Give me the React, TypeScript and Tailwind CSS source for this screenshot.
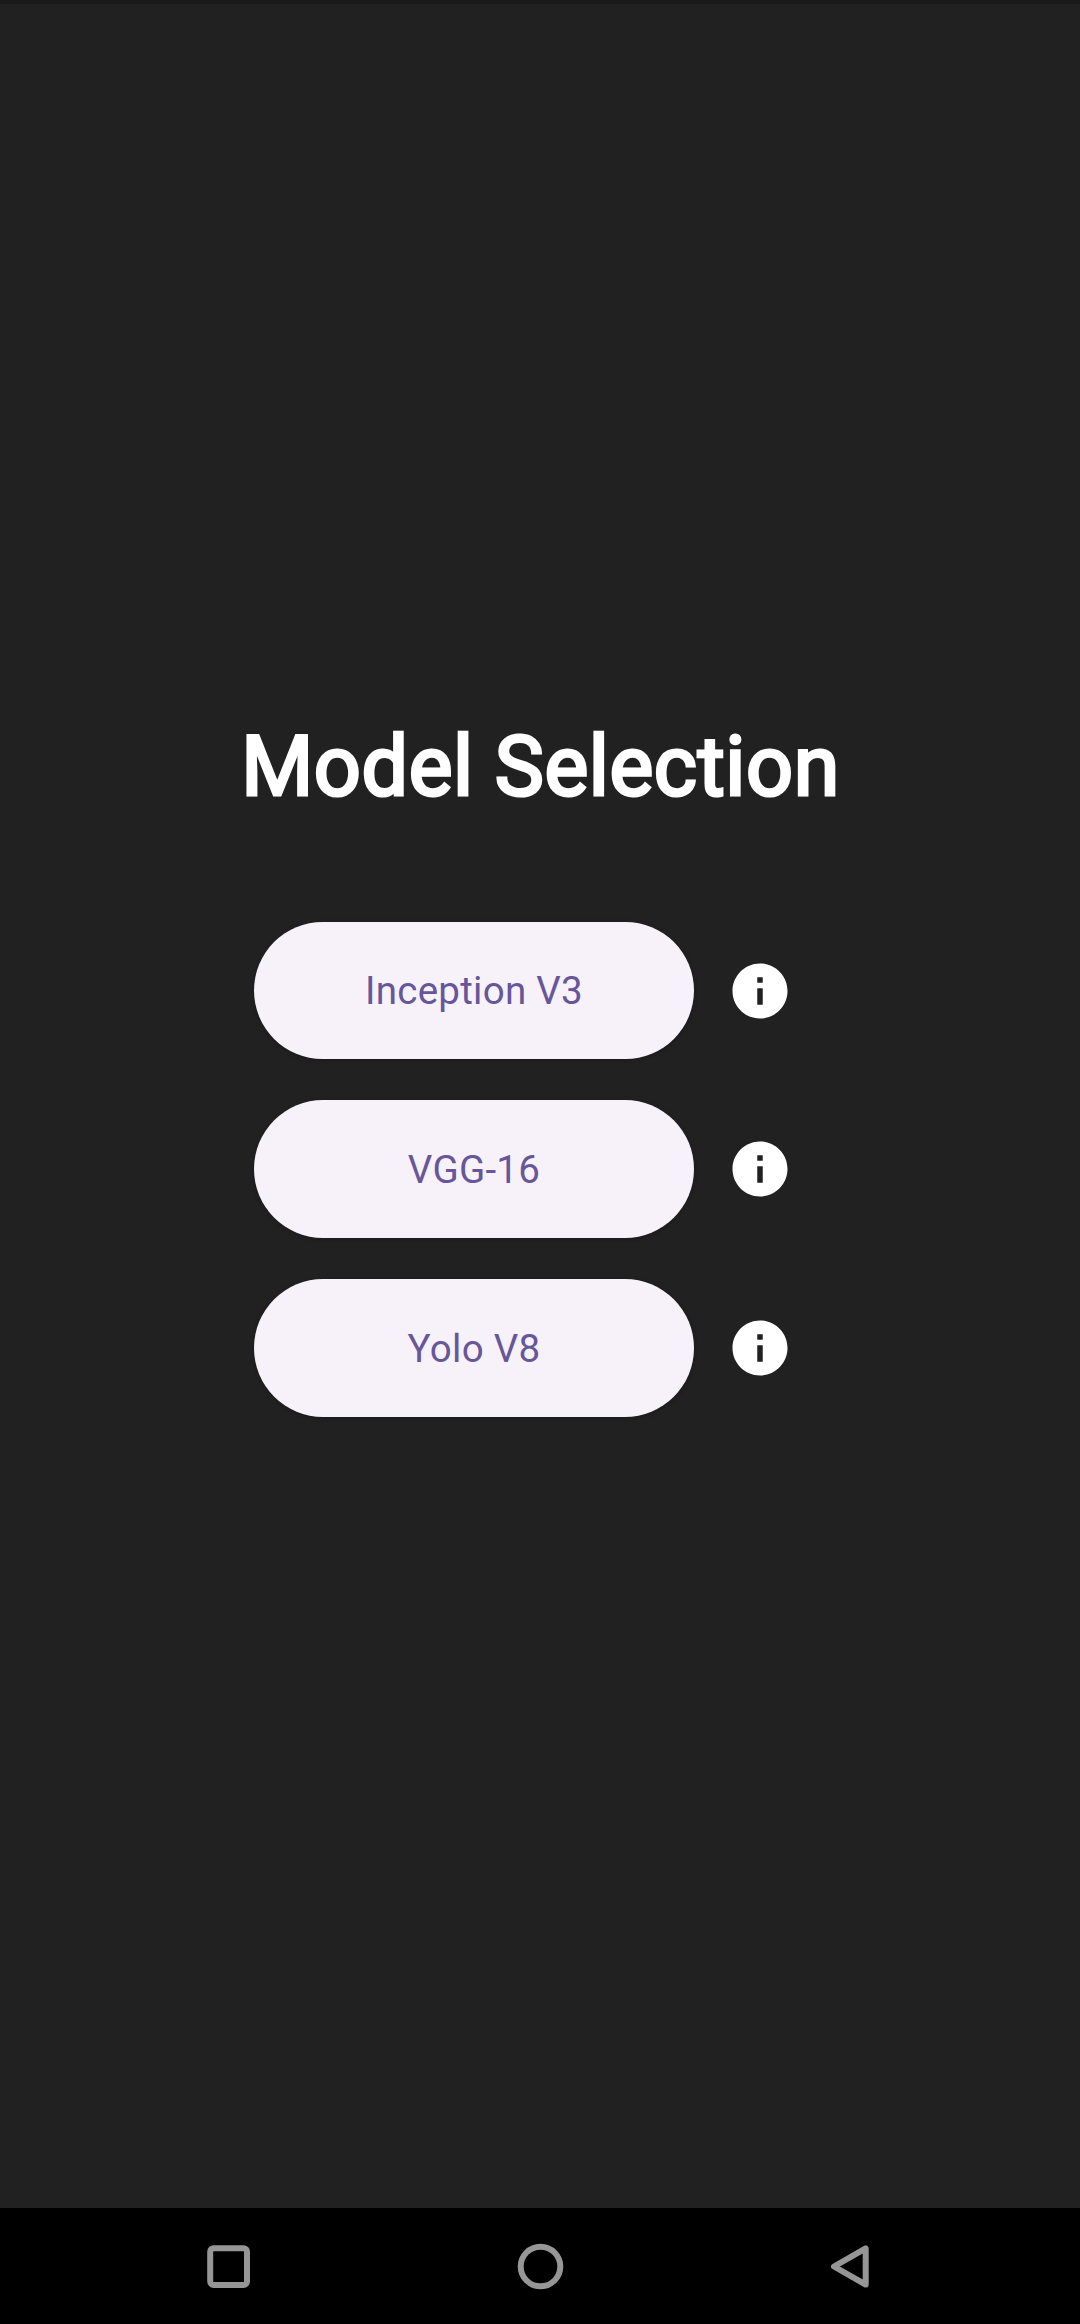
const models = ["Inception V3", "VGG-16", "Yolo V8"];

function InfoIcon() {
  return (
    <svg viewBox="0 0 24 24" className="size-[66px] shrink-0" fill="#ffffff" aria-hidden="true">
      <path d="M12 2C6.48 2 2 6.48 2 12s4.48 10 10 10 10-4.48 10-10S17.52 2 12 2zm1 15h-2v-6h2v6zm0-8h-2V7h2v2z" />
    </svg>
  );
}

function ModelRow({ name }: { name: string }) {
  return (
    <li className="flex h-[137.5px] items-center">
      <button className="h-full w-[440px] rounded-full bg-[#f7f2fa] pt-[1.5px] text-[38.5px] tracking-[0.275px] text-[#67569a] shadow-[0_1px_4px_rgba(0,0,0,0.25)]">
        {name}
      </button>
      <button className="mt-[0.6px] ml-[33px]" aria-label={`About ${name}`}>
        <InfoIcon />
      </button>
    </li>
  );
}

export default function App() {
  return (
    <div className="flex h-[2324px] w-[1080px] flex-col bg-[#212121] font-['Roboto',sans-serif]">
      <div className="h-1 bg-[#1a1a1a]" />
      <main className="flex flex-1 flex-col items-center pt-[711px]">
        <h1 className="h-[103px] pl-px text-[82.5px] leading-[104px] font-normal tracking-[0.63px] whitespace-nowrap text-white [-webkit-text-stroke:3.1px_#ffffff]">
          Model Selection
        </h1>
        <ul className="mt-[103.5px] flex w-[572px] flex-col gap-[41.25px]">
          {models.map((name) => (
            <ModelRow key={name} name={name} />
          ))}
        </ul>
      </main>
      <nav className="grid h-[116px] grid-cols-[456px_168px_456px] bg-black">
        <button className="flex items-center justify-center" aria-label="Recent apps">
          <svg className="size-12" viewBox="0 0 48 48" fill="none" stroke="#969696" strokeWidth="6">
            <rect x="6.2" y="6.2" width="36.8" height="36.8" rx="3.5" />
          </svg>
        </button>
        <button className="flex items-center justify-center" aria-label="Home">
          <svg className="size-12" viewBox="0 0 48 48" fill="none" stroke="#969696" strokeWidth="6">
            <circle cx="24.5" cy="24.5" r="19.8" />
          </svg>
        </button>
        <button className="flex items-center justify-center" aria-label="Back">
          <svg className="size-12" viewBox="0 0 48 48" fill="none" stroke="#969696" strokeWidth="6" strokeLinejoin="round">
            <path d="M37.7 6.4V42.6L6 24.5Z" />
          </svg>
        </button>
      </nav>
    </div>
  );
}
